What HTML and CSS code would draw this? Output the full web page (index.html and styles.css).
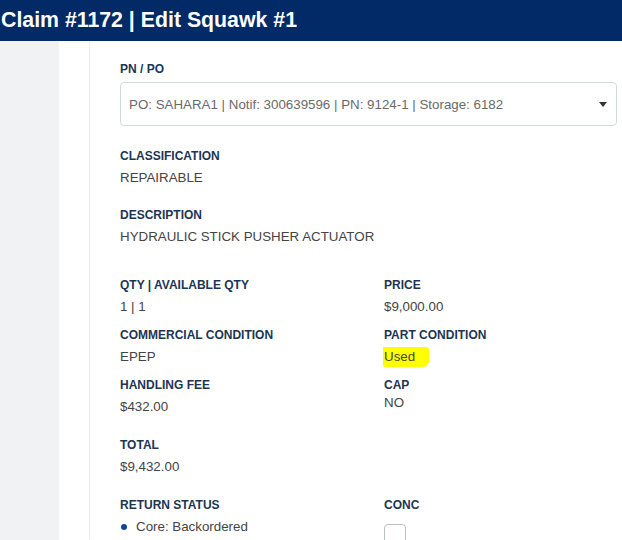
FILE: index.html
```html
<!DOCTYPE html>
<html>
<head>
<meta charset="utf-8">
<link rel="stylesheet" href="styles.css">
</head>
<body>
<header class="topbar"><h1 class="title">Claim #1172 | Edit Squawk #1</h1></header>
<div class="layout">
  <aside class="sidebar"></aside>
  <div class="gutter"></div>
  <main class="content">
    <div class="label">PN / PO</div>
    <div class="select">
      <span class="select-text">PO: SAHARA1 | Notif: 300639596 | PN: 9124-1 | Storage: 6182</span>
      <span class="caret"></span>
    </div>

    <div class="field field-classification">
      <div class="label">CLASSIFICATION</div>
      <div class="value">REPAIRABLE</div>
    </div>

    <div class="field field-description">
      <div class="label">DESCRIPTION</div>
      <div class="value">HYDRAULIC STICK PUSHER ACTUATOR</div>
    </div>

    <div class="grid grid-details">
      <div class="field">
        <div class="label">QTY | AVAILABLE QTY</div>
        <div class="value">1 | 1</div>
      </div>
      <div class="field">
        <div class="label">PRICE</div>
        <div class="value">$9,000.00</div>
      </div>
      <div class="field">
        <div class="label">COMMERCIAL CONDITION</div>
        <div class="value">EPEP</div>
      </div>
      <div class="field">
        <div class="label">PART CONDITION</div>
        <div class="value"><span class="highlight">Used</span></div>
      </div>
      <div class="field">
        <div class="label">HANDLING FEE</div>
        <div class="value">$432.00</div>
      </div>
      <div class="field">
        <div class="label">CAP</div>
        <div class="value value-tight">NO</div>
      </div>
    </div>

    <div class="field field-total">
      <div class="label">TOTAL</div>
      <div class="value">$9,432.00</div>
    </div>

    <div class="grid grid-status">
      <div class="field">
        <div class="label">RETURN STATUS</div>
        <div class="value status"><span class="dot"></span>Core: Backordered</div>
      </div>
      <div class="field">
        <div class="label">CONC</div>
        <div class="checkbox"></div>
      </div>
    </div>
  </main>
</div>
</body>
</html>
```

FILE: styles.css
```css
html, body {
  margin: 0;
  padding: 0;
  height: 100%;
  overflow: hidden;
}
body {
  font-family: "Liberation Sans", Arial, sans-serif;
  background: #ffffff;
}
.topbar {
  height: 41px;
  background: #012a66;
  display: flex;
  align-items: center;
  padding-left: 1px;
}
.title {
  margin: 0;
  color: #ffffff;
  font-size: 21.3px;
  font-weight: bold;
  line-height: 26px;
  position: relative;
  top: -1px;
}
.layout {
  display: flex;
  height: 499px;
}
.sidebar {
  width: 59px;
  background: #f1f2f4;
  flex: none;
}
.gutter {
  width: 30px;
  flex: none;
  border-right: 1px solid #eeeff1;
  box-shadow: 1px 0 2px rgba(0,0,0,0.03);
}
.content {
  flex: 1;
  padding: 18px 5px 0 30px;
}
.label {
  font-size: 12px;
  font-weight: bold;
  color: #1c3554;
  line-height: 20px;
}
.value {
  font-size: 13.33px;
  color: #444444;
  line-height: 24px;
}
.value-tight {
  line-height: 16px;
}
.select {
  margin-top: 3px;
  height: 42px;
  border: 1px solid #d3d8df;
  border-radius: 4px;
  display: flex;
  align-items: center;
  padding: 0 9px 0 8px;
}
.select-text {
  flex: 1;
  font-size: 13.33px;
  color: #6a6a6a;
}
.caret {
  width: 0;
  height: 0;
  border-left: 4px solid transparent;
  border-right: 4px solid transparent;
  border-top: 5px solid #333333;
}
.field {
  display: flex;
  flex-direction: column;
}
.field-classification {
  margin-top: 20px;
}
.field-description {
  margin-top: 15px;
}
.grid {
  display: grid;
  grid-template-columns: 264px 1fr;
  row-gap: 6px;
}
.grid-details {
  margin-top: 26px;
}
.field-total {
  margin-top: 16px;
}
.grid-status {
  margin-top: 16px;
}
.highlight {
  background: #ffff00;
  padding: 2px 14px 3px 1px;
  margin-left: -1px;
  border-radius: 1px 3px 6px 2px;
}
.status {
  display: flex;
  align-items: center;
}
.dot {
  width: 6px;
  height: 6px;
  border-radius: 50%;
  background: #14449b;
  margin: 0 9px 0 1px;
}
.checkbox {
  margin-top: 9px;
  width: 20px;
  height: 20px;
  border: 1px solid #b9c0ca;
  border-radius: 4px;
}
```
